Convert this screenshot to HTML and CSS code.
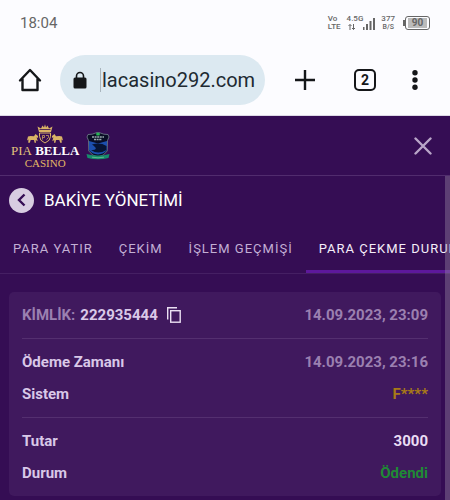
FILE: index.html
```html
<!DOCTYPE html>
<html lang="tr">
<head>
    <meta charset="UTF-8">
    <meta name="viewport" content="width=device-width, initial-scale=1.0">
    <title>Bakiye Yönetimi</title>
    <link rel="stylesheet" href="styles.css">
</head>
<body>
    <!-- Phone status bar -->
    <div class="status-bar">
        <span class="clock">18:04</span>
        <div class="status-icons">
            <div class="stack"><span>Vo</span><span>LTE</span></div>
            <div class="network">
                <div class="stack">
                    <span>4.5G</span>
                    <svg width="8" height="8" viewBox="0 0 8 8" fill="none" stroke="#666"><path d="M2 7V1.500M0.500 3L2 1.500 3.500 3M5.500 1v5.500M4 5l1.500 1.500L7 5"/></svg>
                </div>
                <svg width="12" height="14" viewBox="0 0 12 14" fill="#666"><path d="M0 10h1.500v3H0zM3 7h2v6H3zM6.500 4h2v9h-2zM10 1h2v12h-2z"/></svg>
            </div>
            <div class="stack speed"><span>377</span><small>B/S</small></div>
            <div class="battery"><span>90</span></div>
        </div>
    </div>

    <!-- Browser toolbar -->
    <div class="toolbar">
        <button class="tool" aria-label="Ana sayfa">
            <svg width="24" height="24" viewBox="0 0 24 24" fill="none" stroke="#151719" stroke-width="2.4" stroke-linejoin="round" stroke-linecap="round">
                <path d="M2 12.5L12 2l10 10.500M4.500 11V22h15V11"/>
            </svg>
        </button>
        <label class="address">
            <svg width="14" height="18" viewBox="0 0 14 18">
                <path d="M3.5 7V5a3.5 3.5 0 0 1 7 0v2" fill="none" stroke="#151719" stroke-width="1.6"/>
                <rect x="0.5" y="6.5" width="13" height="11" rx="1.5" fill="#151719"/>
            </svg>
            <input class="url" type="text" value="lacasino292.com" aria-label="Adres">
        </label>
        <button class="tool plus" aria-label="Yeni sekme">
            <svg width="20" height="20" viewBox="0 0 20 20"><path d="M10 0v20M0 10h20" stroke="#151719" stroke-width="2.4"/></svg>
        </button>
        <button class="tool tab-count" aria-label="Sekmeler">2</button>
        <button class="tool more" aria-label="Menü">
            <svg width="6" height="20" viewBox="0 0 6 20" fill="#151719"><circle cx="3" cy="2.7" r="2.7"/><circle cx="3" cy="10" r="2.7"/><circle cx="3" cy="17.3" r="2.7"/></svg>
        </button>
    </div>

    <main class="site">
        <header class="site-header">
            <a href="#" class="logo">
                <svg width="36" height="20" viewBox="0 0 36 20" fill="#d9b366">
                    <path d="M12 8L10.5 2.5 14 4.5 15.5 1.5 17 3.5 18 0.3 19 3.5 20.5 1.5 22 4.5 25.5 2.5 24 8z"/>
                    <path d="M12.5 5.5h11" stroke="#350d54" stroke-width="0.8"/>
                    <path d="M12.5 9h11v3.5q0 4.2-5.5 6.5-5.5-2.3-5.5-6.5z" fill="#350d54" stroke="#d9b366"/>
                    <path d="M15.5 11.5v4M15.5 11.5h2v2h-2M19 11.5h2.5v2l-2 2" fill="none" stroke="#d9b366" stroke-width="0.7"/>
                    <path id="horse" d="M11 12L8.5 10 7 12.2 3.500 12 1 12.500 0 16.500 1.500 15.500 1.200 18.800H2.800L3.700 16H7l0.600 2.800H9L8.700 16 10.700 17.200 10 14.500 9.500 13.500 11 13.800z"/>
                    <use href="#horse" transform="translate(36 0) scale(-1 1)"/>
                </svg>
                <span class="logo-name"><i>PIA</i> BELLA</span>
                <span class="logo-sub">CASINO</span>
            </a>
            <a href="#" class="badge" aria-label="Sponsor">
                <svg width="24" height="28" viewBox="0 0 24 28">
                    <path d="M2 2.5Q7 2.5 9 1.2L12 0.2 15 1.2Q17 2.5 22 2.5L23 5 21.5 8.5 21.2 19Q18 24 12 25 6 24 2.8 19L2.5 8.5 1 5z" fill="#090d25" stroke="#74848d" stroke-width="0.8"/>
                    <path d="M3 9L12 11.500 21 9V18Q18 22 12 22.500 6 22 3 18z" fill="#1c4fae"/>
                    <path d="M6 12.500Q14 10 20.500 14v4Q12 23 5 18 14 18 6 12.500z" fill="#071434"/>
                    <path d="M6 5h12M8 7.5h8" stroke="#99a9ad" stroke-width="1.5" stroke-dasharray="2 0.6"/>
                    <path d="M10 1.5L12 0.5 14 1.5 13.5 3.5h-3z" fill="#29b456"/>
                    <path d="M0.500 22Q12 25 23.500 22L22.500 26Q12 28.5 1.500 26z" fill="#168c6c"/>
                    <path d="M6 25.2Q12 26.4 18 25.2" fill="none" stroke="#70c193" stroke-width="0.8"/>
                </svg>
            </a>
            <button class="close" aria-label="Kapat">
                <svg width="18" height="18" viewBox="0 0 18 18"><path d="M1.5 1.5l15 15M16.5 1.5l-15 15" stroke="#b9a5c8" stroke-width="2.4" stroke-linecap="round"/></svg>
            </button>
        </header>

        <div class="content">
            <div class="title-row">
                <button class="back" aria-label="Geri">
                    <svg width="10" height="14" viewBox="0 0 10 14"><path d="M7.5 1.5L2 7l5.5 5.5" fill="none" stroke="#350d54" stroke-width="2.4"/></svg>
                </button>
                <h1>BAKİYE YÖNETİMİ</h1>
            </div>

            <nav class="tabs">
                <a href="#">PARA YATIR</a>
                <a href="#">ÇEKİM</a>
                <a href="#">İŞLEM GEÇMİŞİ</a>
                <a href="#" class="active">PARA ÇEKME DURUMU</a>
            </nav>

            <section class="card">
                <div class="group">
                    <div class="row">
                        <div class="ident">
                            <span class="muted">KİMLİK:</span>
                            <span>222935444</span>
                            <button class="copy" aria-label="Kopyala">
                                <svg width="14" height="16" viewBox="0 0 14 16" fill="none" stroke="#eadff2" stroke-width="1.4"><path d="M0.7 12.5V0.7H10"/><rect x="3.7" y="3.7" width="9.5" height="11.5"/></svg>
                            </button>
                        </div>
                        <span class="muted">14.09.2023, 23:09</span>
                    </div>
                </div>
                <div class="group">
                    <div class="row"><span>Ödeme Zamanı</span><span class="muted">14.09.2023, 23:16</span></div>
                    <div class="row"><span>Sistem</span><span class="system">F****</span></div>
                </div>
                <div class="group">
                    <div class="row"><span>Tutar</span><span class="amount">3000</span></div>
                    <div class="row"><span>Durum</span><span class="paid">Ödendi</span></div>
                </div>
            </section>
            <div class="scroll-thumb"></div>
        </div>
    </main>
</body>
</html>
```
FILE: styles.css
```css
* {
    box-sizing: border-box;
}
body {
    margin: 0;
    min-height: 100vh;
    display: flex;
    flex-direction: column;
    background: #fcfcff;
    font-family: Roboto, "Noto Sans", sans-serif;
}
button {
    border: 0;
    padding: 0;
    background: none;
    font-family: inherit;
    cursor: pointer;
}
a {
    text-decoration: none;
}
svg {
    display: block;
    flex: none;
}

/* Status bar */
.status-bar {
    display: flex;
    justify-content: space-between;
    align-items: center;
    height: 46px;
    padding: 0 20px;
    color: #666;
}
.clock {
    font-size: 15px;
}
.status-icons {
    display: flex;
    align-items: center;
    gap: 6px;
}
.stack {
    display: flex;
    flex-direction: column;
    font-size: 8px;
    font-weight: 500;
    line-height: 8px;
}
.speed {
    align-items: center;
}
.speed small {
    font-size: 7px;
}
.network {
    display: flex;
    align-items: flex-end;
}
.network .stack svg {
    margin-left: 1px;
}
.battery {
    position: relative;
    margin-left: 4px;
    width: 25px;
    height: 14px;
    padding: 1px 2px;
    border: 1px solid #666;
    border-radius: 3px;
    font-size: 10px;
    font-weight: 700;
    line-height: 10px;
    text-align: center;
}
.battery span {
    display: block;
    background: #bbb;
}
.battery::before {
    content: "";
    position: absolute;
    left: -3px;
    top: 3px;
    width: 2px;
    height: 6px;
    background: #666;
}

/* Browser toolbar */
.toolbar {
    display: flex;
    align-items: center;
    height: 70px;
    padding: 0 32px 2px 18px;
    border-bottom: 1px solid #ddd9e6;
}
.address {
    flex: 1;
    display: flex;
    align-items: center;
    gap: 13px;
    min-width: 0;
    height: 50px;
    margin: 0 30px 0 18px;
    padding: 0 8px 0 13px;
    border-radius: 25px;
    background: #dce9f1;
}
.url {
    flex: 1;
    min-width: 0;
    padding: 0 0 0 1px;
    border: 0;
    border-left: 1px solid #a9b5bd;
    background: none;
    color: #202a31;
    font: 20px/24px Roboto, sans-serif;
    outline: none;
}
.tab-count {
    width: 22px;
    height: 22px;
    margin: 0 36px 0 39px;
    border: 2px solid #151719;
    border-radius: 5px;
    color: #151719;
    font-size: 14px;
    font-weight: 700;
    line-height: 18px;
}

/* Site */
.site {
    flex: 1;
    display: flex;
    flex-direction: column;
    background: #350d54;
    color: #d9c8e8;
}
.site-header {
    display: flex;
    align-items: center;
    height: 60px;
    padding: 0 18px 0 11px;
    border-bottom: 1px solid #512c6e;
}
.logo {
    display: flex;
    flex-direction: column;
    align-items: center;
    color: #fff;
    font-family: "Liberation Serif", serif;
    font-size: 13px;
    font-weight: 700;
    line-height: 14px;
    white-space: nowrap;
}
.logo i {
    color: #e2c27c;
    font-style: normal;
    font-weight: 400;
}
.logo-sub {
    color: #e2b866;
    font-size: 11px;
    font-weight: 400;
    line-height: 10px;
}
.badge {
    margin-left: 7px;
}
.close {
    margin-left: auto;
}

.content {
    position: relative;
    flex: 1;
    padding-bottom: 5px;
}
.scroll-thumb {
    position: absolute;
    top: 0;
    right: 0;
    bottom: 0;
    width: 5px;
    background: rgba(156, 140, 166, 0.4);
}
.title-row {
    display: flex;
    align-items: center;
    gap: 10px;
    height: 48px;
    padding-left: 9px;
}
.back {
    display: flex;
    align-items: center;
    justify-content: center;
    width: 25px;
    height: 25px;
    border-radius: 50%;
    background: #d8cde1;
}
h1 {
    margin: 0;
    color: #fff;
    font-size: 17px;
    font-weight: 400;
}

.tabs {
    display: flex;
    height: 50px;
    overflow: hidden;
    border-bottom: 1px solid #451f63;
}
.tabs a {
    flex: none;
    padding: 0 13px;
    color: #c3afd4;
    font-size: 13px;
    letter-spacing: 1px;
    line-height: 50px;
    white-space: nowrap;
}
.tabs .active {
    color: #f4edf9;
    border-bottom: 3px solid #5d189b;
}

.card {
    margin: 18px 9px 0;
    padding: 7px 13px;
    border-radius: 5px;
    background: #40195e;
    font-size: 15px;
    font-weight: 700;
}
.group + .group {
    margin-top: 7px;
    padding-top: 7px;
    border-top: 1px solid #542f70;
}
.row {
    display: flex;
    justify-content: space-between;
    align-items: center;
    height: 32px;
}
.ident {
    display: flex;
    align-items: center;
    gap: 5px;
}
.copy {
    margin-left: 4px;
}
.muted {
    color: #9b80b0;
}
.amount {
    color: #eadcf4;
}
.system {
    color: #a87a17;
}
.paid {
    color: #1f8a35;
}
```
